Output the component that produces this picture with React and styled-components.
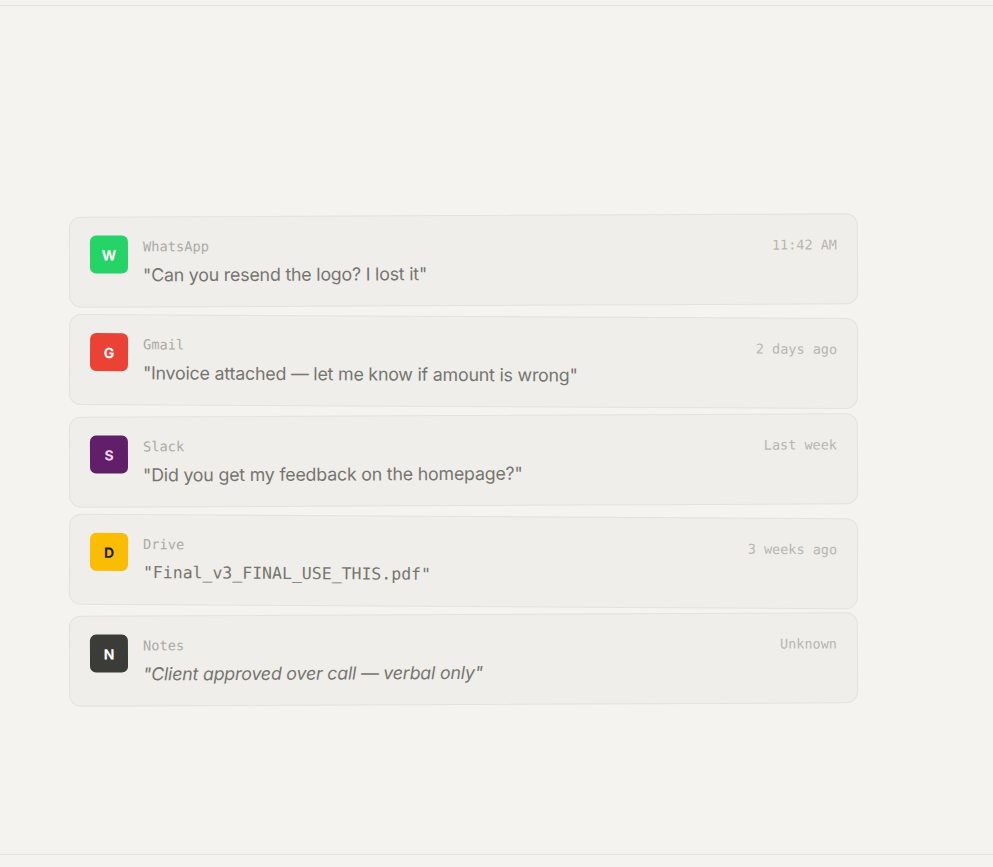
import React from 'react'
import styled, { createGlobalStyle } from 'styled-components'

const GlobalStyle = createGlobalStyle`
  html, body {
    margin: 0;
    padding: 0;
    background: #f4f3ef;
  }
  body {
    font-family: Inter, "Noto Sans", sans-serif;
  }
`

const Section = styled.section`
  margin-top: 5px;
  height: 850px;
  border-top: 1px solid #e2e1dc;
  border-bottom: 1px solid #e2e1dc;
  padding: 209px 0 0 69px;
  box-sizing: border-box;
`

const List = styled.div`
  width: 789px;
  display: flex;
  flex-direction: column;
  gap: 10px;
`

const Card = styled.article`
  display: flex;
  align-items: flex-start;
  gap: 15px;
  height: 91px;
  box-sizing: border-box;
  padding: 18px 20px 0 20px;
  background: #efeeea;
  border: 1px solid #e3e2dd;
  border-radius: 12px;
  transform: translate(0, ${p => p.$shift}px) rotate(${p => p.$tilt}deg);
`

const Badge = styled.div`
  flex: 0 0 38px;
  height: 38px;
  border-radius: 6px;
  background: ${p => p.$bg};
  color: ${p => p.$fg};
  display: flex;
  align-items: center;
  justify-content: center;
  font-family: Inter, sans-serif;
  font-weight: 700;
  font-size: 14px;
`

const Body = styled.div`
  flex: 1;
  display: flex;
  flex-direction: column;
  gap: 8px;
  padding-top: 2px;
`

const Source = styled.div`
  font-family: "DejaVu Sans Mono", monospace;
  font-size: 13.7px;
  color: #ababa6;
  line-height: 18px;
`

const Message = styled.div`
  font-family: ${p => (p.$mono ? '"DejaVu Sans Mono", monospace' : 'Inter, sans-serif')};
  font-size: ${p => (p.$mono ? '16.5px' : '17.8px')};
  font-style: ${p => (p.$italic ? 'italic' : 'normal')};
  color: #76756f;
  line-height: 24px;
  letter-spacing: ${p => (p.$mono ? '0' : '-0.2px')};
`

const Time = styled.div`
  font-family: "DejaVu Sans Mono", monospace;
  font-size: 13.5px;
  color: #b7b6b1;
  line-height: 18px;
  padding-top: 3px;
  white-space: nowrap;
`

const items = [
  { letter: 'W', bg: '#25d366', fg: '#ffffff', source: 'WhatsApp', text: '"Can you resend the logo? I lost it"', time: '11:42 AM', tilt: -0.25, shift: 0 },
  { letter: 'G', bg: '#ea4335', fg: '#ffffff', source: 'Gmail', text: '"Invoice attached — let me know if amount is wrong"', time: '2 days ago', tilt: 0.3, shift: 0 },
  { letter: 'S', bg: '#611f69', fg: '#f3d6ef', source: 'Slack', text: '"Did you get my feedback on the homepage?"', time: 'Last week', tilt: -0.25, shift: -2 },
  { letter: 'D', bg: '#fbbc04', fg: '#1f1f1f', source: 'Drive', text: '"Final_v3_FINAL_USE_THIS.pdf"', time: '3 weeks ago', tilt: 0.35, shift: -2, mono: true },
  { letter: 'N', bg: '#3b3b37', fg: '#ffffff', source: 'Notes', text: '"Client approved over call — verbal only"', time: 'Unknown', tilt: -0.25, shift: -5, italic: true },
]

export default function App() {
  return (
    <>
      <GlobalStyle />
      <Section>
        <List>
          {items.map(item => (
            <Card key={item.source} $tilt={item.tilt} $shift={item.shift}>
              <Badge $bg={item.bg} $fg={item.fg}>{item.letter}</Badge>
              <Body>
                <Source>{item.source}</Source>
                <Message $mono={item.mono} $italic={item.italic}>{item.text}</Message>
              </Body>
              <Time>{item.time}</Time>
            </Card>
          ))}
        </List>
      </Section>
    </>
  )
}
